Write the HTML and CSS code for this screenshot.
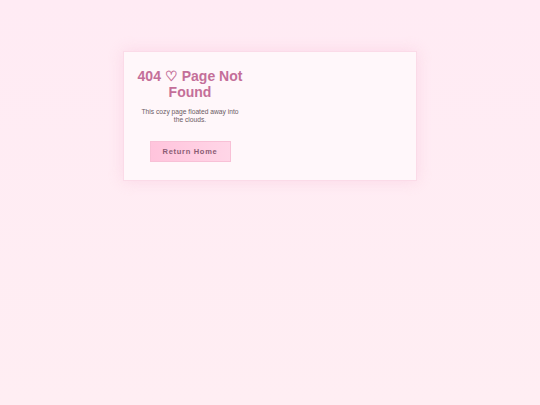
FILE: index.html
```html
<!DOCTYPE html>
<html lang="en">
<head>
<meta charset="utf-8">
<title>404 - Page Not Found</title>
<link rel="stylesheet" href="styles.css">
</head>
<body>
<main class="card">
  <div class="content">
    <h1 class="title">404 ♡ Page Not Found</h1>
    <p class="message">This cozy page floated away into the clouds.</p>
    <a class="home-btn" href="#">Return Home</a>
  </div>
</main>
</body>
</html>
```

FILE: styles.css
```css
html, body {
  margin: 0;
  padding: 0;
}

body {
  min-height: 405px;
  background: linear-gradient(180deg, #ffebf4 0%, #ffeef3 100%);
  font-family: "Liberation Sans", Arial, sans-serif;
  padding-top: 51px;
  box-sizing: border-box;
}

.card {
  width: 294px;
  box-sizing: border-box;
  margin: 0 auto;
  padding: 17px 8px 18px;
  background: #fff7fa;
  border: 1px solid #fbdbe8;
  box-shadow: 0 0 14px rgba(246, 190, 214, 0.45);
}

.content {
  width: 116px;
  display: flex;
  flex-direction: column;
  align-items: center;
  text-align: center;
}

.title {
  margin: 0;
  font-size: 14px;
  line-height: 15.5px;
  font-weight: bold;
  color: #c46f99;
}

.message {
  margin: 8px 0 0;
  max-width: 100px;
  font-size: 6.7px;
  line-height: 8px;
  color: #6b5a63;
}

.home-btn {
  margin-top: 17px;
  width: 81px;
  height: 21px;
  flex: none;
  box-sizing: border-box;
  display: flex;
  align-items: center;
  justify-content: center;
  background: linear-gradient(90deg, #ffc4dc 0%, #ffd6e7 100%);
  border: 1px solid #f8c0d6;
  color: #8b5c74;
  font-size: 7.5px;
  font-weight: bold;
  letter-spacing: 0.7px;
  text-decoration: none;
}
```
